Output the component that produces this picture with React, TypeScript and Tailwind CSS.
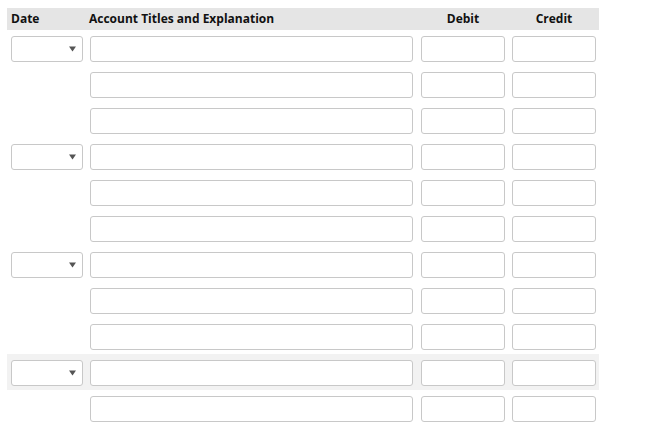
import React from "react";

const rows = [true, false, false, true, false, false, true, false, false, true, false];

function Box({ w }: { w: string }) {
  return <div className={`${w} h-[26px] shrink-0 rounded-[3px] border border-[#c8c8c8] bg-white`} />;
}

export default function App() {
  return (
    <div className="min-h-[431px] w-[664px] bg-white pt-2 pl-[7px] text-[#111]" style={{ fontFamily: '"Open Sans", "DejaVu Sans", sans-serif' }}>
      <div className="w-[592px]">
        <div className="flex h-[22px] items-center bg-[#e5e5e5] text-[12px] font-bold">
          <div className="w-[82px] pl-[4px]">Date</div>
          <div className="w-[332px]">Account Titles and Explanation</div>
          <div className="w-[84px] text-center">Debit</div>
          <div className="ml-[7px] w-[84px] text-center">Credit</div>
        </div>
        {rows.map((hasDate, i) => (
          <div key={i} className={`flex h-[36px] items-start pt-[6px] pl-[4px] ${i === 9 ? "bg-[#f2f2f2]" : ""}`}>
            <div className="w-[79px] shrink-0">
              {hasDate && (
                <div className="relative h-[26px] w-[72px] rounded-[3px] border border-[#c8c8c8] bg-white">
                  <svg className="absolute left-[57px] top-[9px]" width="7" height="6" viewBox="0 0 7 6">
                    <path d="M0 0.5 H7 L3.5 5.5 Z" fill="#555" />
                  </svg>
                </div>
              )}
            </div>
            <Box w="w-[323px]" />
            <div className="ml-[8px]"><Box w="w-[84px]" /></div>
            <div className="ml-[7px]"><Box w="w-[84px]" /></div>
          </div>
        ))}
      </div>
    </div>
  );
}
